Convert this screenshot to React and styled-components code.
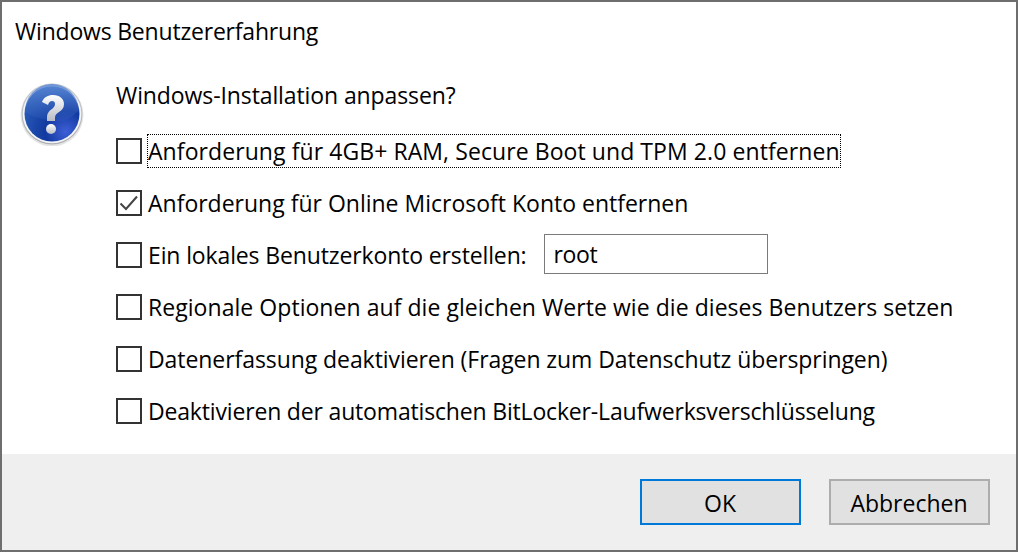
import React from "react";
import styled, { createGlobalStyle } from "styled-components";

const GlobalStyle = createGlobalStyle`
  html, body {
    margin: 0;
    padding: 0;
    background: #6e6e6e;
  }
  * {
    box-sizing: border-box;
  }
`;

const Window = styled.div`
  width: 1018px;
  height: 552px;
  padding: 2px;
  display: flex;
  flex-direction: column;
  background: #6e6e6e;
  font-family: "Open Sans", "Noto Sans", sans-serif;
  font-size: 23px;
  color: #000;
`;

const Body = styled.div`
  flex: 1;
  background: #fff;
  padding: 14px 13px 0;
`;

const Title = styled.div`
  height: 30px;
  line-height: 30px;
  letter-spacing: -0.2px;
`;

const Main = styled.div`
  display: flex;
  margin-top: 34px;
`;

const IconBox = styled.div`
  width: 101px;
  flex: none;
  padding: 2px 0 0 5px;
`;

const Content = styled.div`
  flex: 1;
`;

const Question = styled.div`
  height: 30px;
  line-height: 30px;
  letter-spacing: -0.1px;
  margin-bottom: 24px;
`;

const Rows = styled.div`
  display: flex;
  flex-direction: column;
  gap: 18px;
`;

const Row = styled.div`
  height: 34px;
  display: flex;
  align-items: center;
`;

const Box = styled.span`
  width: 26px;
  height: 26px;
  flex: none;
  border: 2px solid #333;
  display: flex;
  align-items: center;
  justify-content: center;
  background: #fff;
`;

const Label = styled.span`
  margin-left: 5px;
  height: 34px;
  line-height: 32px;
  white-space: nowrap;
  letter-spacing: ${(p) => p.$tracking}px;
  border: 1px dotted ${(p) => (p.$focused ? "#000" : "transparent")};
`;

const NameInput = styled.div`
  width: 224px;
  height: 40px;
  margin: 0 0 2px 16px;
  padding-left: 9px;
  line-height: 38px;
  letter-spacing: -0.35px;
  border: 1px solid #7a7a7a;
`;

const Footer = styled.div`
  height: 96px;
  flex: none;
  background: #efefef;
  display: flex;
  justify-content: flex-end;
  align-items: flex-start;
  gap: 28px;
  padding: 25px 26px 0 0;
`;

const Button = styled.div`
  width: 161px;
  height: 46px;
  padding: 1px 1px 0 0;
  background: #e1e1e1;
  border: 2px solid ${(p) => (p.$primary ? "#0078d7" : "#adadad")};
  display: flex;
  align-items: center;
  justify-content: center;
`;

function QuestionIcon() {
  return (
    <svg width="64" height="64" viewBox="0 0 64 64">
      <defs>
        <linearGradient id="ring" x1="0" y1="0" x2="0" y2="1">
          <stop offset="0" stopColor="#c9ccd1" />
          <stop offset="1" stopColor="#aeb0b3" />
        </linearGradient>
        <radialGradient id="ball" cx="0.75" cy="0.82" r="0.85">
          <stop offset="0" stopColor="#3d5fd8" />
          <stop offset="0.45" stopColor="#12399f" />
          <stop offset="1" stopColor="#2a5cba" />
        </radialGradient>
        <linearGradient id="shine" x1="0" y1="0" x2="0" y2="1">
          <stop offset="0" stopColor="#5f8cd6" stopOpacity="0.9" />
          <stop offset="1" stopColor="#2e5cb8" stopOpacity="0.25" />
        </linearGradient>
        <linearGradient id="mark" x1="0" y1="0" x2="0" y2="1">
          <stop offset="0" stopColor="#ffffff" />
          <stop offset="1" stopColor="#b9bcc6" />
        </linearGradient>
      </defs>
      <circle cx="32" cy="33" r="31.5" fill="#000" opacity="0.1" />
      <circle cx="32" cy="32" r="30.5" fill="url(#ring)" />
      <circle cx="32" cy="32" r="29.3" fill="#f4f5f6" />
      <circle cx="32" cy="32" r="27.5" fill="url(#ball)" />
      <path
        d="M5 30a27 27 0 0 1 54 -2c-10 11-17 13-28 11c-10-2-17-4-26-9z"
        fill="url(#shine)"
      />
      <path
        d="M22 20c2-5 6-7 11-7c7 0 11 4 11 9c0 4-2 6-5 8c-3 2-4 3-4 7v2h-8v-3c0-5 2-7 5-9c2-2 3-3 3-5c0-2-1-3-3-3c-2 0-3 1-4 4z"
        fill="url(#mark)"
      />
      <circle cx="31" cy="47" r="5" fill="url(#mark)" />
    </svg>
  );
}

function Check() {
  return (
    <svg width="22" height="22" viewBox="0 0 22 22">
      <path d="M2.5 11.5l5.5 5.5L19 4.5" fill="none" stroke="#444" strokeWidth="2" />
    </svg>
  );
}

const options = [
  { text: "Anforderung für 4GB+ RAM, Secure Boot und TPM 2.0 entfernen", tracking: 0.08, focused: true },
  { text: "Anforderung für Online Microsoft Konto entfernen", tracking: 0, checked: true },
  { text: "Ein lokales Benutzerkonto erstellen:", tracking: -0.13, input: "root" },
  { text: "Regionale Optionen auf die gleichen Werte wie die dieses Benutzers setzen", tracking: 0.05 },
  { text: "Datenerfassung deaktivieren (Fragen zum Datenschutz überspringen)", tracking: -0.07 },
  { text: "Deaktivieren der automatischen BitLocker-Laufwerksverschlüsselung", tracking: -0.17 },
];

export default function App() {
  return (
    <>
      <GlobalStyle />
      <Window>
        <Body>
          <Title>Windows Benutzererfahrung</Title>
          <Main>
            <IconBox>
              <QuestionIcon />
            </IconBox>
            <Content>
              <Question>Windows-Installation anpassen?</Question>
              <Rows>
                {options.map((item, index) => {
                  return (
                    <Row key={index}>
                      <Box>{item.checked && <Check />}</Box>
                      <Label $focused={item.focused} $tracking={item.tracking}>
                        {item.text}
                      </Label>
                      {item.input && <NameInput>{item.input}</NameInput>}
                    </Row>
                  );
                })}
              </Rows>
            </Content>
          </Main>
        </Body>
        <Footer>
          <Button $primary>OK</Button>
          <Button>Abbrechen</Button>
        </Footer>
      </Window>
    </>
  );
}
